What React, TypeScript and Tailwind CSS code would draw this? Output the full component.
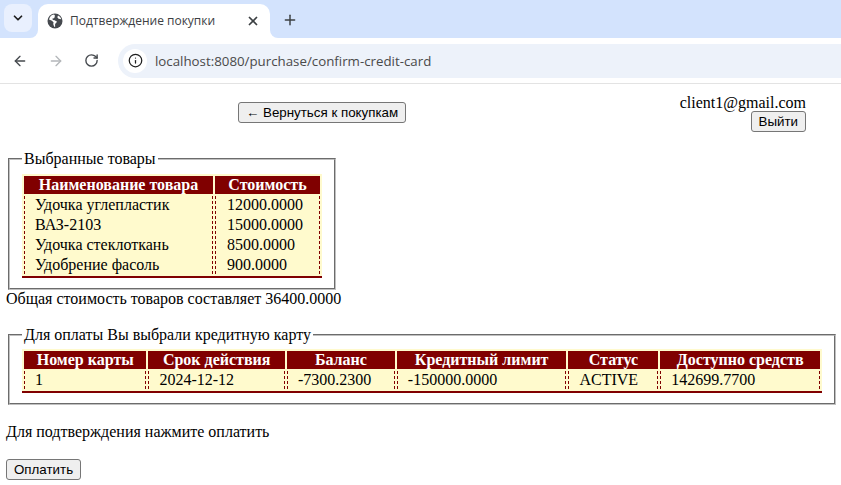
import { ArrowLeft, ArrowRight, ChevronDown, Info, Plus, RotateCw, X } from 'lucide-react'

const GOODS = [
  ['Удочка углепластик', '12000.0000'],
  ['ВАЗ-2103', '15000.0000'],
  ['Удочка стеклоткань', '8500.0000'],
  ['Удобрение фасоль', '900.0000'],
]

const CARD_HEAD = [
  ['Номер карты', 'w-[123px]'],
  ['Срок действия', 'w-[137px]'],
  ['Баланс', 'w-[108px]'],
  ['Кредитный лимит', 'w-[170px]'],
  ['Статус', 'w-[90px]'],
  ['Доступно средств', 'w-[160px]'],
]

const CARD_ROW = ['1', '2024-12-12', '-7300.2300', '-150000.0000', 'ACTIVE', '142699.7700']

const btn =
  'h-[21px] rounded-[3px] border border-[#767676] bg-[#efefef] px-[7px] font-["Liberation_Sans",Arial,sans-serif] text-[13.33px] leading-[19px] text-black'

const fieldsetCls =
  'mx-[2px] min-w-0 border-2 border-[#c0c0c0] [border-style:groove] px-[12px] pt-[5.6px] pb-[10px]'

const tableCls =
  'border-separate [border-spacing:2px] border-b-2 border-b-[#800000] bg-[#fffacd] text-black'

const thCls = 'h-[18px] bg-[#800000] p-0 text-center font-bold leading-[18px] text-white'

const tdCls = 'h-[18px] border-x border-dashed border-x-[#800000] px-[10px] py-0 text-left leading-[18px]'

const GlobeIcon = () => (
  <svg width="16" height="16" viewBox="0 0 16 16" className="shrink-0">
    <circle cx="8" cy="8" r="7.5" fill="#45494e" />
    <path
      d="M2 6.5l3 1.2 1.6 1.8-.4 1.5 1 2.8.9.2V11l2-2.2-2.5-1.6-1.6-.2-.8-1.2 1.6-.5.9-1 .1-2.3-1.3-.4C4.5 1.8 2.8 3.800 2 6.500zM11 2.500l-.7 1.700 1.200 1.600 2.800.5C13.900 4.700 12.700 3.300 11 2.500z"
      fill="#fff"
    />
  </svg>
)

const BrowserChrome = () => (
  <div className="font-['Open_Sans',sans-serif]">
    <div className="flex h-[38px] items-end bg-[#d3e3fd] pl-[4px]">
      <div className="mb-[6px] flex h-[28px] w-[28px] items-center justify-center rounded-[8px] bg-[#e9f0fe]">
        <ChevronDown size={14} strokeWidth={3} color="#1f1f1f" />
      </div>
      <div className="relative ml-[6px] flex h-[34px] w-[232px] items-center rounded-t-[10px] bg-white pl-[9px] pr-[10px]">
        <div className="absolute bottom-0 left-[-8px] h-[8px] w-[8px] bg-white">
          <div className="h-full w-full rounded-br-[8px] bg-[#d3e3fd]" />
        </div>
        <div className="absolute bottom-0 right-[-8px] h-[8px] w-[8px] bg-white">
          <div className="h-full w-full rounded-bl-[8px] bg-[#d3e3fd]" />
        </div>
        <GlobeIcon />
        <span className="ml-[7px] flex-1 text-[12px] text-[#3c4043]">Подтверждение покупки</span>
        <X size={14} strokeWidth={3} color="#3c4043" />
      </div>
      <div className="mb-[10px] ml-[12px] flex h-[16px] w-[16px] items-center justify-center">
        <Plus size={16} strokeWidth={2.2} color="#3c4043" />
      </div>
    </div>
    <div className="flex h-[46px] items-center border-b border-b-[#e3e3e3] bg-white pl-[12px]">
      <ArrowLeft size={16} strokeWidth={2} color="#45494e" />
      <ArrowRight size={16} strokeWidth={2} color="#b4b7ba" className="ml-[20px]" />
      <RotateCw size={15} strokeWidth={2.2} color="#45494e" className="ml-[20px]" />
      <div className="ml-[19px] flex h-[34px] flex-1 items-center rounded-l-[17px] bg-[#edf2fa] pl-[5px]">
        <div className="flex h-[24px] w-[24px] items-center justify-center rounded-full bg-white">
          <Info size={15} strokeWidth={2} color="#1f1f1f" />
        </div>
        <span className="ml-[8px] text-[13.3px] text-[#4a4a4a]">localhost:8080/purchase/confirm-credit-card</span>
      </div>
    </div>
  </div>
)

export default function App() {
  return (
    <div className="h-[485px] w-[841px] overflow-hidden bg-white font-['Liberation_Serif','Times_New_Roman',serif] text-[16px] leading-[18px] text-black">
      <BrowserChrome />
      <div className="px-[6px] pt-[10px]">
        <div className="flex items-start justify-between pl-[232px] pr-[29px]">
          <button className={`${btn} mt-[8px]`}>← Вернуться к покупкам</button>
          <div className="flex flex-col items-end">
            <span className="h-[17px]">client1@gmail.com</span>
            <button className={btn}>Выйти</button>
          </div>
        </div>

        <fieldset className={`${fieldsetCls} mt-[18px] w-[328px]`}>
          <legend className="px-[2px]">Выбранные товары</legend>
          <table className={tableCls}>
            <thead>
              <tr>
                <th className={`${thCls} w-[190px]`}>Наименование товара</th>
                <th className={`${thCls} w-[105px]`}>Стоимость</th>
              </tr>
            </thead>
            <tbody>
              {GOODS.map(([name, price]) => (
                <tr key={name}>
                  <td className={tdCls}>{name}</td>
                  <td className={`${tdCls} pl-[11px]`}>{price}</td>
                </tr>
              ))}
            </tbody>
          </table>
        </fieldset>
        <p>Общая стоимость товаров составляет 36400.0000</p>

        <fieldset className={`${fieldsetCls} mt-[18px] w-[828px]`}>
          <legend className="px-[2px]">Для оплаты Вы выбрали кредитную карту</legend>
          <table className={tableCls}>
            <thead>
              <tr>
                {CARD_HEAD.map(([title, width]) => (
                  <th key={title} className={`${thCls} ${width}`}>
                    {title}
                  </th>
                ))}
              </tr>
            </thead>
            <tbody>
              <tr>
                {CARD_ROW.map((value) => (
                  <td key={value} className={tdCls}>
                    {value}
                  </td>
                ))}
              </tr>
            </tbody>
          </table>
        </fieldset>

        <p className="mt-[18px]">Для подтверждения нажмите оплатить</p>
        <button className={`${btn} mt-[18px]`}>Оплатить</button>
      </div>
    </div>
  )
}
